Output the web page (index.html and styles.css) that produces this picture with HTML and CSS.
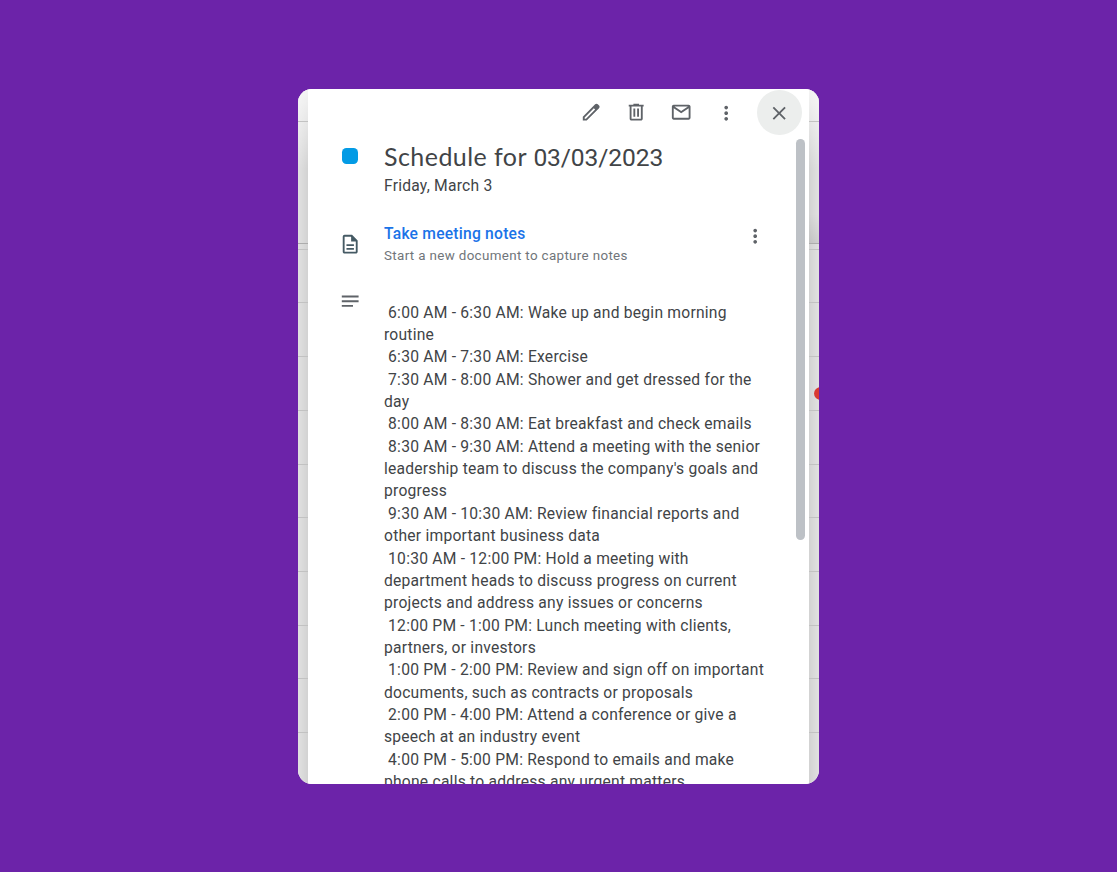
FILE: index.html
```html
<!DOCTYPE html>
<html lang="en">
<head>
<meta charset="utf-8">
<title>Schedule for 03/03/2023</title>
<link rel="stylesheet" href="styles.css">
</head>
<body>
<main class="window">
  <div class="strip strip-left">
    <i class="head-top"></i><i class="head-mid"></i><i class="head-gap"></i>
    <i class="slot"></i><i class="slot"></i><i class="slot"></i><i class="slot"></i><i class="slot"></i><i class="slot"></i><i class="slot"></i><i class="slot"></i><i class="slot"></i>
  </div>
  <section class="dialog">
    <header class="toolbar">
      <button class="tool" aria-label="Edit"><svg width="22.4" height="22.4" viewBox="0 0 24 24"><path d="M20.41 4.94l-1.35-1.35c-.78-.78-2.05-.78-2.83 0L3 16.82V21h4.18L20.41 7.77c.79-.78.79-2.05 0-2.83zm-14 14.12L5 19v-1.36l9.82-9.82 1.41 1.41-9.82 9.83z"/></svg></button>
      <button class="tool" aria-label="Delete"><svg width="22.4" height="22.4" viewBox="0 0 24 24"><path d="M15 4V3H9v1H4v2h1v13c0 1.1.9 2 2 2h10c1.1 0 2-.9 2-2V6h1V4h-5zm2 15H7V6h10v13zM9 8h2v9H9zm4 0h2v9h-2z"/></svg></button>
      <button class="tool" aria-label="Email"><svg width="22.4" height="22.4" viewBox="0 0 24 24"><path d="M20 4H4c-1.1 0-2 .9-2 2v12c0 1.1.9 2 2 2h16c1.1 0 2-.9 2-2V6c0-1.1-.9-2-2-2zm-.8 2L12 10.8 4.8 6h14.4zM4 18V7.87l8 5.33 8-5.33V18H4z"/></svg></button>
      <button class="tool tool-more" aria-label="Options"><svg width="22.4" height="22.4" viewBox="0 0 24 24"><path d="M12 8c1.1 0 2-.9 2-2s-.9-2-2-2-2 .9-2 2 .9 2 2 2zm0 2c-1.1 0-2 .9-2 2s.9 2 2 2 2-.9 2-2-.9-2-2-2zm0 6c-1.1 0-2 .9-2 2s.9 2 2 2 2-.9 2-2-.9-2-2-2z"/></svg></button>
      <button class="tool tool-close" aria-label="Close"><svg width="22.4" height="22.4" viewBox="0 0 24 24"><path d="M19 6.41L17.59 5 12 10.59 6.41 5 5 6.41 10.59 12 5 17.59 6.41 19 12 13.41 17.59 19 19 17.59 13.41 12z"/></svg></button>
    </header>
    <div class="body">
      <div class="content">
        <div class="row row-title">
          <span class="swatch"></span>
          <div>
            <h1 class="title">Schedule for <span class="digits">03/03/2023</span></h1>
            <p class="date">Friday, March 3</p>
          </div>
        </div>
        <div class="row row-notes">
          <svg class="doc" width="22.4" height="22.4" viewBox="0 0 24 24"><path d="M8 16h8v2H8zm0-4h8v2H8zm6-10H6c-1.1 0-2 .9-2 2v16c0 1.1.89 2 1.99 2H18c1.1 0 2-.9 2-2V8l-6-6zm4 18H6V4h7v5h5v11z"/></svg>
          <div class="notes">
            <a class="link">Take meeting notes</a>
            <p class="hint">Start a new document to capture notes</p>
          </div>
          <svg class="more" width="22.4" height="22.4" viewBox="0 0 24 24"><path d="M12 8c1.1 0 2-.9 2-2s-.9-2-2-2-2 .9-2 2 .9 2 2 2zm0 2c-1.1 0-2 .9-2 2s.9 2 2 2 2-.9 2-2-.9-2-2-2zm0 6c-1.1 0-2 .9-2 2s.9 2 2 2 2-.9 2-2-.9-2-2-2z"/></svg>
        </div>
        <div class="row row-desc">
          <svg class="lines" width="22.4" height="22.4" viewBox="0 0 24 24"><path d="M3 6h18v2H3zM3 11h18v2H3zM3 16h12v2H3z"/></svg>
          <div class="desc"> 6:00 AM - 6:30 AM: Wake up and begin morning
routine
 6:30 AM - 7:30 AM: Exercise
 7:30 AM - 8:00 AM: Shower and get dressed for the
day
 8:00 AM - 8:30 AM: Eat breakfast and check emails
 8:30 AM - 9:30 AM: Attend a meeting with the senior
leadership team to discuss the company's goals and
progress
 9:30 AM - 10:30 AM: Review financial reports and
other important business data
 10:30 AM - 12:00 PM: Hold a meeting with
department heads to discuss progress on current
projects and address any issues or concerns
 12:00 PM - 1:00 PM: Lunch meeting with clients,
partners, or investors
 1:00 PM - 2:00 PM: Review and sign off on important
documents, such as contracts or proposals
 2:00 PM - 4:00 PM: Attend a conference or give a
speech at an industry event
 4:00 PM - 5:00 PM: Respond to emails and make
phone calls to address any urgent matters</div>
        </div>
      </div>
      <div class="scrollbar"></div>
    </div>
  </section>
  <div class="strip strip-right">
    <i class="head-top"></i><i class="head-mid"></i><i class="head-gap"></i>
    <i class="slot"></i><i class="slot"></i><i class="slot"></i><i class="slot"></i><i class="slot"></i><i class="slot"></i><i class="slot"></i><i class="slot"></i><i class="slot"></i>
    <span class="now-dot"></span>
  </div>
</main>
</body>
</html>
```
FILE: styles.css
```css
* { box-sizing: border-box; }
body {
  margin: 0;
  height: 872px;
  padding: 89px 298px 88px;
  overflow: hidden;
  background: #6c23a9;
  font-family: Roboto, "Liberation Sans", sans-serif;
  color: #414447;
}
h1, p { margin: 0; font-weight: 400; }
.window {
  display: grid;
  grid-template-columns: 10px 501px 10px;
  height: 695px;
  border-radius: 14px;
  overflow: hidden;
  background: #fff;
}
.strip {
  display: flex;
  flex-direction: column;
  position: relative;
  height: 695px;
  overflow: hidden;
}
.strip-left { background: linear-gradient(rgba(255,255,255,.75), rgba(255,255,255,0) 80px), linear-gradient(90deg, #e1e1e1, #d2d2d2); }
.strip-right { background: linear-gradient(rgba(255,255,255,.75), rgba(255,255,255,0) 80px), linear-gradient(270deg, #e1e1e1, #d2d2d2); }
.strip i { display: block; flex: none; border-bottom: 1.4px solid #c2c2c2; }
.strip .head-top { height: 33.3px; }
.strip .head-mid { height: 122px; border-color: #acacac; }
.strip .head-gap { height: 5.5px; }
.strip .slot { height: 53.7px; }
.strip-right .head-mid { background: linear-gradient(transparent 92px, rgba(0,0,0,.08)); }
.now-dot {
  position: absolute;
  left: 4.5px;
  top: 297.5px;
  width: 13px;
  height: 13px;
  border-radius: 50%;
  background: #d93a32;
}
.dialog { height: 695px; overflow: hidden; background: #fff; }
.toolbar {
  display: flex;
  justify-content: flex-end;
  height: 50px;
  padding: 1px 7px 0 0;
}
.tool {
  display: grid;
  place-items: center;
  width: 44.8px;
  height: 44.8px;
  padding: 0;
  border: 0;
  border-radius: 50%;
  background: none;
}
.tool svg, .more, .lines { fill: #5f6368; }
.tool-more { margin-right: 8.8px; }
.tool-more svg { transform: translateY(1px); }
.tool-close { background: #eceeed; }
.tool-close svg { transform: translateY(1px); }
.body { display: flex; justify-content: space-between; padding-right: 4px; }
.content { width: 465px; }
.scrollbar { width: 9.5px; height: 401px; border-radius: 5px; background: #bdc1c6; }
.row { display: grid; grid-template-columns: 45px 1fr; padding-left: 31px; }
.swatch {
  width: 16px;
  height: 16px;
  margin: 9px 0 0 3.4px;
  border-radius: 4.5px;
  background: #039be5;
}
.title {
  height: 36px;
  font-family: Lato, sans-serif;
  font-size: 25px;
  line-height: 34px;
  letter-spacing: .45px;
  white-space: nowrap;
}
.digits { font-family: Roboto, sans-serif; font-size: 24.6px; letter-spacing: -.1px; }
.date { font-size: 15.65px; line-height: 22px; letter-spacing: .22px; }
.row-title { height: 84px; }
.row-notes { grid-template-columns: 45px 1fr 23px; height: 67px; }
.doc { margin: 10px 0 0 .4px; fill: #455a64; }
.link { display: block; color: #1a73e8; font-size: 15.65px; font-weight: 500; line-height: 22.4px; letter-spacing: .22px; }
.hint { padding-top: 1px; color: #70757a; font-size: 13.4px; line-height: 20px; letter-spacing: .34px; }
.more { margin: 2px 0 0 -6px; }
.lines { margin-left: .4px; }
.desc {
  margin-top: 11.6px;
  font-size: 15.65px;
  line-height: 22.36px;
  letter-spacing: .225px;
  white-space: pre;
}
```
